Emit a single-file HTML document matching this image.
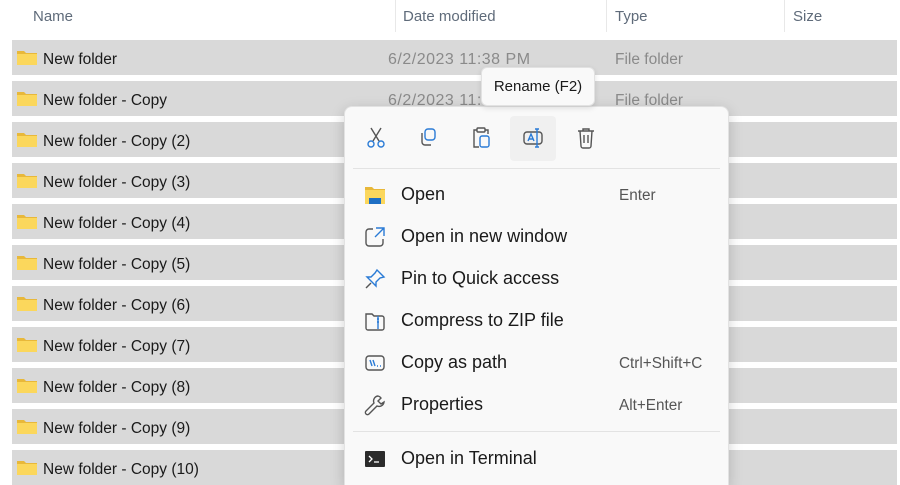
<!DOCTYPE html>
<html style="height:485px;overflow:hidden"><head><meta charset="utf-8"><style>
body{margin:0;width:900px;height:485px;background:#fff;position:relative;overflow:hidden;font-family:"Segoe UI","Liberation Sans",sans-serif;}
.h{position:absolute;top:8px;font-size:15px;color:#5f6b7a}
.sep{position:absolute;top:0;width:1px;height:32px;background:#e8e8e8}
.row{position:absolute;left:12px;width:885px;height:35px;background:#d9d9d9}
.row .n{position:absolute;left:31px;top:11px;font-size:15.5px;color:#1a1a1a}
.row .d{position:absolute;left:376px;top:11px;font-size:16px;color:#8a8a8a;letter-spacing:0.5px}
.row .t{position:absolute;left:603px;top:11px;font-size:15.5px;color:#8a8a8a}
.fold{position:absolute;left:5px;top:10px;width:20px;height:15px}
.menu{position:absolute;left:344px;top:106px;width:383px;height:379px;background:#f9f9f9;border:1px solid #e2e2e2;border-bottom:none;border-radius:8px 8px 0 0;box-shadow:0 4px 14px rgba(0,0,0,.18)}
.tip{position:absolute;left:481px;top:67px;width:112px;height:37px;background:#f9f9f9;border:1px solid #e2e2e2;border-radius:6px;box-shadow:0 2px 6px rgba(0,0,0,.12);font-size:15px;color:#1a1a1a;line-height:37px;text-align:center}
.mi{position:absolute;left:0;width:383px;height:40px}
.mi .l{position:absolute;left:56px;top:9px;font-size:18px;color:#1a1a1a}
.mi .s{position:absolute;left:274px;top:12px;font-size:15.3px;color:#555}
.mi svg{position:absolute;left:19px;top:9px}
.hr{position:absolute;left:8px;width:367px;height:1px;background:#e3e3e3}
.tb svg{position:absolute;top:20px}
</style></head><body>
<div class="h" style="left:33px">Name</div>
<div class="h" style="left:403px">Date modified</div>
<div class="h" style="left:615px">Type</div>
<div class="h" style="left:793px">Size</div>
<div class="sep" style="left:395px"></div><div class="sep" style="left:606px"></div><div class="sep" style="left:784px"></div>

<div class="row" style="top:40px"><svg class="fold" viewBox="0 0 20 15"><path d="M0 1h7l2 2h11v12H0z" fill="#e8b83a"/><rect y="4" width="20" height="11" fill="#fbd75c"/></svg><span class="n">New folder</span><span class="d">6/2/2023 11:38 PM</span><span class="t">File folder</span></div>
<div class="row" style="top:81px"><svg class="fold" viewBox="0 0 20 15"><path d="M0 1h7l2 2h11v12H0z" fill="#e8b83a"/><rect y="4" width="20" height="11" fill="#fbd75c"/></svg><span class="n">New folder - Copy</span><span class="d">6/2/2023 11:38 PM</span><span class="t">File folder</span></div>
<div class="row" style="top:122px"><svg class="fold" viewBox="0 0 20 15"><path d="M0 1h7l2 2h11v12H0z" fill="#e8b83a"/><rect y="4" width="20" height="11" fill="#fbd75c"/></svg><span class="n">New folder - Copy (2)</span></div>
<div class="row" style="top:163px"><svg class="fold" viewBox="0 0 20 15"><path d="M0 1h7l2 2h11v12H0z" fill="#e8b83a"/><rect y="4" width="20" height="11" fill="#fbd75c"/></svg><span class="n">New folder - Copy (3)</span></div>
<div class="row" style="top:204px"><svg class="fold" viewBox="0 0 20 15"><path d="M0 1h7l2 2h11v12H0z" fill="#e8b83a"/><rect y="4" width="20" height="11" fill="#fbd75c"/></svg><span class="n">New folder - Copy (4)</span></div>
<div class="row" style="top:245px"><svg class="fold" viewBox="0 0 20 15"><path d="M0 1h7l2 2h11v12H0z" fill="#e8b83a"/><rect y="4" width="20" height="11" fill="#fbd75c"/></svg><span class="n">New folder - Copy (5)</span></div>
<div class="row" style="top:286px"><svg class="fold" viewBox="0 0 20 15"><path d="M0 1h7l2 2h11v12H0z" fill="#e8b83a"/><rect y="4" width="20" height="11" fill="#fbd75c"/></svg><span class="n">New folder - Copy (6)</span></div>
<div class="row" style="top:327px"><svg class="fold" viewBox="0 0 20 15"><path d="M0 1h7l2 2h11v12H0z" fill="#e8b83a"/><rect y="4" width="20" height="11" fill="#fbd75c"/></svg><span class="n">New folder - Copy (7)</span></div>
<div class="row" style="top:368px"><svg class="fold" viewBox="0 0 20 15"><path d="M0 1h7l2 2h11v12H0z" fill="#e8b83a"/><rect y="4" width="20" height="11" fill="#fbd75c"/></svg><span class="n">New folder - Copy (8)</span></div>
<div class="row" style="top:409px"><svg class="fold" viewBox="0 0 20 15"><path d="M0 1h7l2 2h11v12H0z" fill="#e8b83a"/><rect y="4" width="20" height="11" fill="#fbd75c"/></svg><span class="n">New folder - Copy (9)</span></div>
<div class="row" style="top:450px"><svg class="fold" viewBox="0 0 20 15"><path d="M0 1h7l2 2h11v12H0z" fill="#e8b83a"/><rect y="4" width="20" height="11" fill="#fbd75c"/></svg><span class="n">New folder - Copy (10)</span></div>

<div class="menu">
 <div class="tb">
  <div style="position:absolute;left:165px;top:9px;width:46px;height:45px;background:#f0f0f0;border-radius:4px"></div>
  <svg style="left:21px" width="20" height="22" viewBox="0 0 20 22" fill="none" stroke-width="1.4"><path d="M5 1l8 13M15 1L7 14" stroke="#555"/><circle cx="5" cy="17" r="3" stroke="#2a7bd6"/><circle cx="15" cy="17" r="3" stroke="#2a7bd6"/></svg>
  <svg style="left:73px" width="20" height="20" viewBox="0 0 20 20" fill="none" stroke="#555" stroke-width="1.4"><rect x="7" y="2" width="10" height="11" rx="3" stroke="#2a7bd6"/><path d="M4 6v9a3 3 0 003 3h6"/></svg>
  <svg style="left:126px" width="20" height="22" viewBox="0 0 20 22" fill="none" stroke="#555" stroke-width="1.4"><path d="M6 3H3v17h5"/><path d="M14 3h3v4"/><rect x="6" y="1" width="8" height="4" rx="1"/><rect x="9" y="9" width="9" height="11" rx="2" stroke="#2a7bd6"/></svg>
  <svg style="left:177px" width="24" height="22" viewBox="0 0 24 22" fill="none" stroke-width="1.4"><rect x="2" y="5" width="18" height="12" rx="3" stroke="#555"/><path d="M6 14l3-7 3 7M7 12h4" stroke="#2a7bd6"/><path d="M15 2v18M13 2h4M13 20h4" stroke="#2a7bd6"/></svg>
  <svg style="left:231px" width="20" height="22" viewBox="0 0 20 22" fill="none" stroke="#555" stroke-width="1.4"><path d="M2 4h16M7 4V2h6v2M4 4l1 15a2 2 0 002 2h6a2 2 0 002-2l1-15M8 8v8M12 8v8"/></svg>
 </div>
 <div class="hr" style="top:61px"></div>
 <div class="mi" style="top:68px"><svg width="22" height="22" viewBox="0 0 22 22"><path d="M1 3h7l2 2h11v15H1z" fill="#e8b83a"/><rect x="1" y="6" width="20" height="14" fill="#fbd75c"/><rect x="5" y="14" width="12" height="6" fill="#1e6fc4"/></svg><span class="l">Open</span><span class="s">Enter</span></div>
 <div class="mi" style="top:110px"><svg width="22" height="22" viewBox="0 0 22 22" fill="none" stroke-width="1.4"><path d="M9 3H5a3 3 0 00-3 3v11a3 3 0 003 3h11a3 3 0 003-3v-4" stroke="#555"/><path d="M12 2h8v8M20 2l-9 9" stroke="#2a7bd6"/></svg><span class="l">Open in new window</span></div>
 <div class="mi" style="top:152px"><svg width="22" height="22" viewBox="0 0 22 22" fill="none" stroke-width="1.4"><path d="M13 2l7 7-4 1-4 4 0 4-9-9 4 0 4-4z" stroke="#2a7bd6"/><path d="M7 15l-5 5" stroke="#555"/></svg><span class="l">Pin to Quick access</span></div>
 <div class="mi" style="top:194px"><svg width="22" height="22" viewBox="0 0 22 22" fill="none" stroke-width="1.4"><path d="M2 4h6l2 2h8a2 2 0 012 2v10a2 2 0 01-2 2H4a2 2 0 01-2-2z" stroke="#555"/><path d="M14 6v13M13 9h2M13 12h2" stroke="#2a7bd6"/></svg><span class="l">Compress to ZIP file</span></div>
 <div class="mi" style="top:236px"><svg width="22" height="22" viewBox="0 0 22 22" fill="none" stroke-width="1.4"><rect x="2" y="4" width="18" height="14" rx="3" stroke="#555"/><path d="M6 8l2 6M9 8l2 6M13 14h1M16 14h1" stroke="#2a7bd6"/></svg><span class="l">Copy as path</span><span class="s">Ctrl+Shift+C</span></div>
 <div class="mi" style="top:278px"><svg width="22" height="22" viewBox="0 0 22 22" fill="none" stroke="#555" stroke-width="1.4"><path d="M14 2a5 5 0 00-4 7L2 17a2 2 0 003 3l8-8a5 5 0 007-4l-3 2-3-3 3-3a5 5 0 00-3-2z"/></svg><span class="l">Properties</span><span class="s">Alt+Enter</span></div>
 <div class="hr" style="top:324px"></div>
 <div class="mi" style="top:332px"><svg width="22" height="22" viewBox="0 0 22 22"><rect x="1" y="3" width="20" height="16" rx="1" fill="#2b2b2b"/><path d="M5 8l3 3-3 3" stroke="#fff" stroke-width="1.3" fill="none"/><path d="M10 14h5" stroke="#fff" stroke-width="1.3"/></svg><span class="l">Open in Terminal</span></div>
</div>
<div class="tip">Rename (F2)</div>
</body></html>
